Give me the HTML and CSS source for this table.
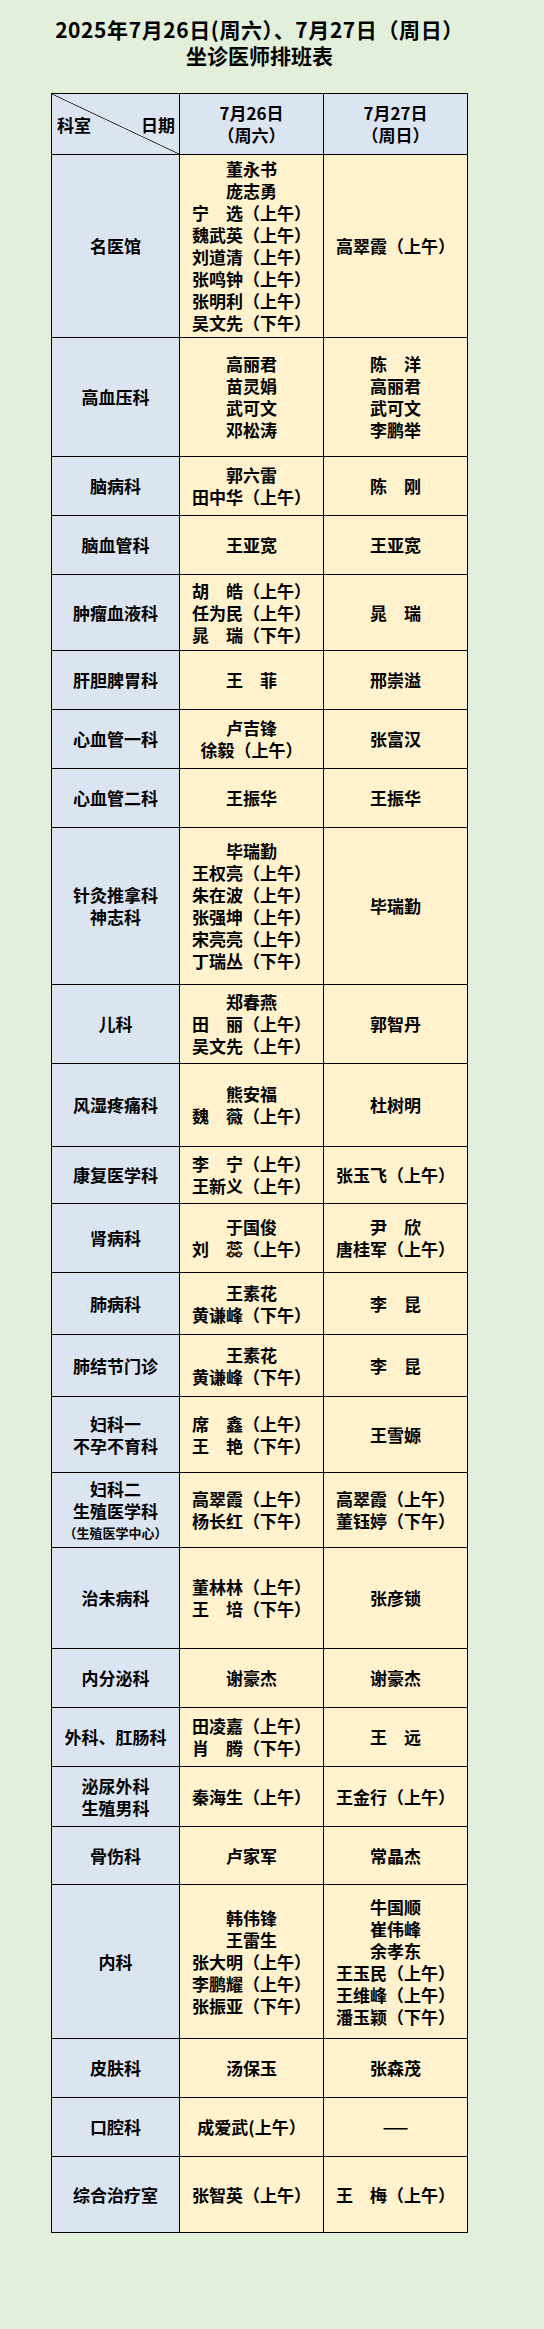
FILE: index.html
```html
<!DOCTYPE html>
<html lang="zh-CN">
<head>
<meta charset="utf-8">
<title>坐诊医师排班表</title>
<link rel="stylesheet" href="styles.css">
</head>
<body>
<div class="page">
  <div class="title">
    <div class="title-line wide">2025年7月26日(周六）、7月27日（周日）</div>
    <div class="title-line">坐诊医师排班表</div>
  </div>

  <div class="table">
    <div class="row h60">
      <div class="cell head diag"><span class="dept-lbl">科室</span><span class="date-lbl">日期</span></div>
      <div class="cell head"><div>7月26日</div><div>（周六）</div></div>
      <div class="cell head"><div>7月27日</div><div>（周日）</div></div>
    </div>

    <div class="row h182">
      <div class="cell dept">名医馆</div>
      <div class="cell name"><div>董永书</div><div>庞志勇</div><div>宁　选（上午）</div><div>魏武英（上午）</div><div>刘道清（上午）</div><div>张鸣钟（上午）</div><div>张明利（上午）</div><div>吴文先（下午）</div></div>
      <div class="cell name"><div>高翠霞（上午）</div></div>
    </div>

    <div class="row h118">
      <div class="cell dept">高血压科</div>
      <div class="cell name"><div>高丽君</div><div>苗灵娟</div><div>武可文</div><div>邓松涛</div></div>
      <div class="cell name"><div>陈　洋</div><div>高丽君</div><div>武可文</div><div>李鹏举</div></div>
    </div>

    <div class="row h58">
      <div class="cell dept">脑病科</div>
      <div class="cell name"><div>郭六雷</div><div>田中华（上午）</div></div>
      <div class="cell name"><div>陈　刚</div></div>
    </div>

    <div class="row h58">
      <div class="cell dept">脑血管科</div>
      <div class="cell name"><div>王亚宽</div></div>
      <div class="cell name"><div>王亚宽</div></div>
    </div>

    <div class="row h75">
      <div class="cell dept">肿瘤血液科</div>
      <div class="cell name"><div>胡　皓（上午）</div><div>任为民（上午）</div><div>晁　瑞（下午）</div></div>
      <div class="cell name"><div>晁　瑞</div></div>
    </div>

    <div class="row h58">
      <div class="cell dept">肝胆脾胃科</div>
      <div class="cell name"><div>王　菲</div></div>
      <div class="cell name"><div>邢崇溢</div></div>
    </div>

    <div class="row h58">
      <div class="cell dept">心血管一科</div>
      <div class="cell name"><div>卢吉锋</div><div>徐毅（上午）</div></div>
      <div class="cell name"><div>张富汉</div></div>
    </div>

    <div class="row h58">
      <div class="cell dept">心血管二科</div>
      <div class="cell name"><div>王振华</div></div>
      <div class="cell name"><div>王振华</div></div>
    </div>

    <div class="row h156">
      <div class="cell dept"><div>针灸推拿科</div><div>神志科</div></div>
      <div class="cell name"><div>毕瑞勤</div><div>王权亮（上午）</div><div>朱在波（上午）</div><div>张强坤（上午）</div><div>宋亮亮（上午）</div><div>丁瑞丛（下午）</div></div>
      <div class="cell name"><div>毕瑞勤</div></div>
    </div>

    <div class="row h78">
      <div class="cell dept">儿科</div>
      <div class="cell name"><div>郑春燕</div><div>田　丽（上午）</div><div>吴文先（上午）</div></div>
      <div class="cell name"><div>郭智丹</div></div>
    </div>

    <div class="row h82">
      <div class="cell dept">风湿疼痛科</div>
      <div class="cell name"><div>熊安福</div><div>魏　薇（上午）</div></div>
      <div class="cell name"><div>杜树明</div></div>
    </div>

    <div class="row h56">
      <div class="cell dept">康复医学科</div>
      <div class="cell name"><div>李　宁（上午）</div><div>王新义（上午）</div></div>
      <div class="cell name"><div>张玉飞（上午）</div></div>
    </div>

    <div class="row h68">
      <div class="cell dept">肾病科</div>
      <div class="cell name"><div>于国俊</div><div>刘　蕊（上午）</div></div>
      <div class="cell name"><div>尹　欣</div><div>唐桂军（上午）</div></div>
    </div>

    <div class="row h61">
      <div class="cell dept">肺病科</div>
      <div class="cell name"><div>王素花</div><div>黄谦峰（下午）</div></div>
      <div class="cell name"><div>李　昆</div></div>
    </div>

    <div class="row h61">
      <div class="cell dept">肺结节门诊</div>
      <div class="cell name"><div>王素花</div><div>黄谦峰（下午）</div></div>
      <div class="cell name"><div>李　昆</div></div>
    </div>

    <div class="row h75">
      <div class="cell dept"><div>妇科一</div><div>不孕不育科</div></div>
      <div class="cell name"><div>席　鑫（上午）</div><div>王　艳（下午）</div></div>
      <div class="cell name"><div>王雪嫄</div></div>
    </div>

    <div class="row h74">
      <div class="cell dept"><div>妇科二</div><div>生殖医学科</div><div class="small">（生殖医学中心）</div></div>
      <div class="cell name"><div>高翠霞（上午）</div><div>杨长红（下午）</div></div>
      <div class="cell name"><div>高翠霞（上午）</div><div>董钰婷（下午）</div></div>
    </div>

    <div class="row h100">
      <div class="cell dept">治未病科</div>
      <div class="cell name"><div>董林林（上午）</div><div>王　培（下午）</div></div>
      <div class="cell name"><div>张彦锁</div></div>
    </div>

    <div class="row h58">
      <div class="cell dept">内分泌科</div>
      <div class="cell name"><div>谢豪杰</div></div>
      <div class="cell name"><div>谢豪杰</div></div>
    </div>

    <div class="row h58">
      <div class="cell dept">外科、肛肠科</div>
      <div class="cell name"><div>田凌嘉（上午）</div><div>肖　腾（下午）</div></div>
      <div class="cell name"><div>王　远</div></div>
    </div>

    <div class="row h59">
      <div class="cell dept"><div>泌尿外科</div><div>生殖男科</div></div>
      <div class="cell name"><div>秦海生（上午）</div></div>
      <div class="cell name"><div>王金行（上午）</div></div>
    </div>

    <div class="row h57">
      <div class="cell dept">骨伤科</div>
      <div class="cell name"><div>卢家军</div></div>
      <div class="cell name"><div>常晶杰</div></div>
    </div>

    <div class="row h153">
      <div class="cell dept">内科</div>
      <div class="cell name"><div>韩伟锋</div><div>王雷生</div><div>张大明（上午）</div><div>李鹏耀（上午）</div><div>张振亚（下午）</div></div>
      <div class="cell name"><div>牛国顺</div><div>崔伟峰</div><div>余孝东</div><div>王玉民（上午）</div><div>王维峰（上午）</div><div>潘玉颖（下午）</div></div>
    </div>

    <div class="row h58">
      <div class="cell dept">皮肤科</div>
      <div class="cell name"><div>汤保玉</div></div>
      <div class="cell name"><div>张森茂</div></div>
    </div>

    <div class="row h58">
      <div class="cell dept">口腔科</div>
      <div class="cell name"><div>成爱武(上午）</div></div>
      <div class="cell name"><div class="dash">——</div></div>
    </div>

    <div class="row h75">
      <div class="cell dept">综合治疗室</div>
      <div class="cell name"><div>张智英（上午）</div></div>
      <div class="cell name"><div>王　梅（上午）</div></div>
    </div>
  </div>
</div>
</body>
</html>
```

FILE: styles.css
```css
html, body {
  margin: 0;
  padding: 0;
  background: #e2efda;
}

body {
  min-height: 2329px;
  font-family: "Noto Sans CJK SC", "Noto Sans", sans-serif;
  color: #000;
}

.page {
  width: 417px;
  margin-left: 51px;
}

.title {
  display: flex;
  flex-direction: column;
  align-items: center;
  padding-top: 16px;
  font-size: 21px;
  line-height: 26px;
  font-weight: 700;
  white-space: nowrap;
}

.title .wide {
  letter-spacing: 0.6px;
}

.table {
  margin-top: 25px;
  display: flex;
  flex-direction: column;
  gap: 1px;
  padding: 1px;
  background: #000;
}

.row {
  display: grid;
  grid-template-columns: 127px 143px 143px;
  gap: 1px;
}

.cell {
  display: flex;
  flex-direction: column;
  justify-content: center;
  align-items: center;
  text-align: center;
  font-size: 17px;
  line-height: 22px;
  font-weight: 700;
  white-space: nowrap;
}

.head, .dept {
  background: #dbe5f1;
}

.name {
  background: #fff2cc;
}

.diag {
  flex-direction: row;
  justify-content: space-between;
  align-items: center;
  padding: 2px 4px 0 5px;
  background:
    linear-gradient(to top right, transparent calc(50% - 0.7px), #000 50%, transparent calc(50% + 0.7px)),
    #dbe5f1;
}

.small {
  font-size: 13px;
  line-height: 21px;
}

.dash {
  font-size: 15px;
  letter-spacing: 4px;
  margin-right: -4px;
}

.h56 { height: 56px; }
.h57 { height: 57px; }
.h58 { height: 58px; }
.h59 { height: 59px; }
.h60 { height: 60px; }
.h61 { height: 61px; }
.h68 { height: 68px; }
.h74 { height: 74px; }
.h75 { height: 75px; }
.h78 { height: 78px; }
.h82 { height: 82px; }
.h100 { height: 100px; }
.h118 { height: 118px; }
.h153 { height: 153px; }
.h156 { height: 156px; }
.h182 { height: 182px; }
```
